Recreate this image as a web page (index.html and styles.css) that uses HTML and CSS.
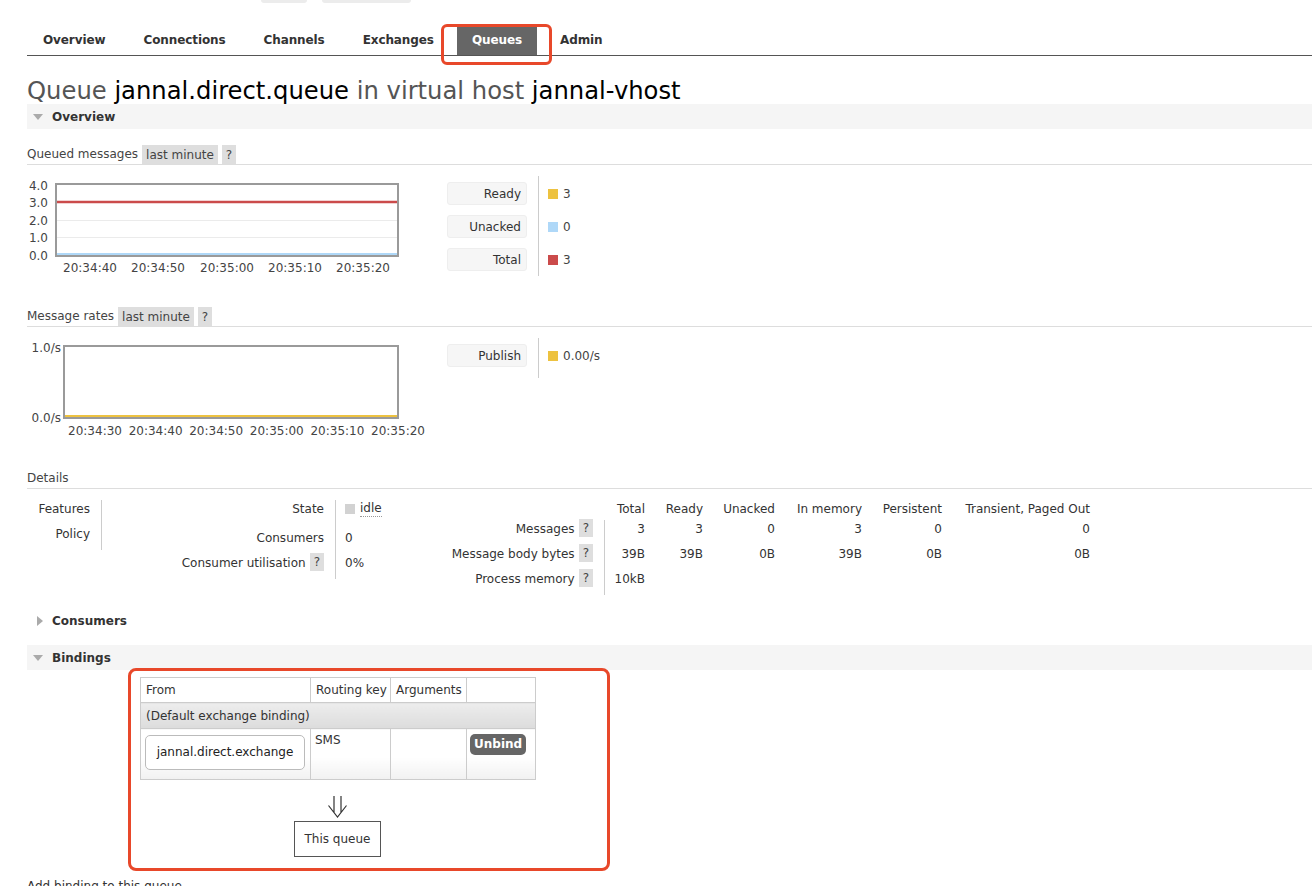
FILE: index.html
```html
<!DOCTYPE html>
<html lang="en">
<head>
<meta charset="utf-8">
<title>Queue jannal.direct.queue</title>
<link rel="stylesheet" href="styles.css">
</head>
<body>
<div class="page">
  <div class="topbar"><span class="stub stub-a"></span><span class="stub stub-b"></span></div>
  <ul class="tabs">
    <li class="tab">Overview</li>
    <li class="tab">Connections</li>
    <li class="tab">Channels</li>
    <li class="tab">Exchanges</li>
    <li class="tab active">Queues</li>
    <li class="tab">Admin</li>
  </ul>

  <h1 class="title">Queue <b>jannal.direct.queue</b> in virtual host <b>jannal-vhost</b></h1>

  <div class="section-head open"><span class="tri-down"></span>Overview</div>

  <div class="subhead">Queued messages <span class="tag">last minute</span><span class="tag">?</span></div>
  <div class="chart-row">
    <div class="chart">
      <svg class="plot plot-a" width="373" height="97" viewBox="0 0 373 97">
        <line class="grid" x1="30" y1="42.5" x2="370" y2="42.5"/>
        <line class="grid" x1="30" y1="59.5" x2="370" y2="59.5"/>
        <line class="s-total" x1="30" y1="24" x2="370" y2="24"/>
        <line class="s-unacked" x1="30" y1="76" x2="370" y2="76"/>
        <rect class="frame" x="29" y="6" width="342" height="72"/>
        <text class="yl" x="21" y="11.5">4.0</text>
        <text class="yl" x="21" y="28.5">3.0</text>
        <text class="yl" x="21" y="46.5">2.0</text>
        <text class="yl" x="21" y="63.5">1.0</text>
        <text class="yl" x="21" y="81.5">0.0</text>
        <text class="xl" x="63" y="93.5">20:34:40</text>
        <text class="xl" x="131" y="93.5">20:34:50</text>
        <text class="xl" x="200" y="93.5">20:35:00</text>
        <text class="xl" x="268" y="93.5">20:35:10</text>
        <text class="xl" x="336" y="93.5">20:35:20</text>
      </svg>
    </div>
    <div class="legend">
      <div class="legend-labels">
        <div class="legend-label">Ready</div>
        <div class="legend-label">Unacked</div>
        <div class="legend-label">Total</div>
      </div>
      <div class="legend-values">
        <div class="legend-value"><span class="swatch sw-ready"></span>3</div>
        <div class="legend-value"><span class="swatch sw-unacked"></span>0</div>
        <div class="legend-value"><span class="swatch sw-total"></span>3</div>
      </div>
    </div>
  </div>

  <div class="subhead gap-top">Message rates <span class="tag">last minute</span><span class="tag">?</span></div>
  <div class="chart-row">
    <div class="chart">
      <svg class="plot" width="403" height="100" viewBox="0 0 403 100">
        <line class="s-publish" x1="38" y1="78" x2="370" y2="78"/>
        <rect class="frame" x="37" y="8" width="334" height="72"/>
        <text class="yl" x="34" y="13.5">1.0/s</text>
        <text class="yl" x="34" y="83.5">0.0/s</text>
        <text class="xl" x="68" y="96.5">20:34:30</text>
        <text class="xl" x="128.6" y="96.5">20:34:40</text>
        <text class="xl" x="189.2" y="96.5">20:34:50</text>
        <text class="xl" x="249.8" y="96.5">20:35:00</text>
        <text class="xl" x="310.4" y="96.5">20:35:10</text>
        <text class="xl" x="371" y="96.5">20:35:20</text>
      </svg>
    </div>
    <div class="legend legend-short">
      <div class="legend-labels">
        <div class="legend-label">Publish</div>
      </div>
      <div class="legend-values">
        <div class="legend-value"><span class="swatch sw-ready"></span>0.00/s</div>
      </div>
    </div>
  </div>

  <div class="subhead gap-top">Details</div>
  <div class="details">
    <div class="facts facts-a">
      <div class="fk">Features</div><div class="fv"></div>
      <div class="fk">Policy</div><div class="fv"></div>
    </div>
    <div class="facts facts-b">
      <div class="fk">State</div><div class="fv state"><span class="state-box"></span><span class="abbr">idle</span></div>
      <div class="fk">Consumers</div><div class="fv">0</div>
      <div class="fk">Consumer utilisation <span class="help">?</span></div><div class="fv">0%</div>
    </div>
    <div class="facts facts-c">
      <div></div>
      <div class="ch">Total</div><div class="ch">Ready</div><div class="ch">Unacked</div><div class="ch">In memory</div><div class="ch">Persistent</div><div class="ch">Transient, Paged Out</div>

      <div class="fk">Messages <span class="help">?</span></div>
      <div class="cv first">3</div><div class="cv">3</div><div class="cv">0</div><div class="cv">3</div><div class="cv">0</div><div class="cv">0</div>

      <div class="fk">Message body bytes <span class="help">?</span></div>
      <div class="cv first">39B</div><div class="cv">39B</div><div class="cv">0B</div><div class="cv">39B</div><div class="cv">0B</div><div class="cv">0B</div>

      <div class="fk">Process memory <span class="help">?</span></div>
      <div class="cv first">10kB</div><div class="cv"></div><div class="cv"></div><div class="cv"></div><div class="cv"></div><div class="cv"></div>
    </div>
  </div>

  <div class="section-head consumers"><span class="tri-right"></span>Consumers</div>
  <div class="section-head open bindings-head"><span class="tri-down"></span>Bindings</div>

  <div class="bindings">
    <table class="btable">
      <colgroup><col class="c1"><col class="c2"><col class="c3"><col class="c4"></colgroup>
      <thead>
        <tr><th>From</th><th>Routing key</th><th>Arguments</th><th></th></tr>
      </thead>
      <tbody>
        <tr class="default"><td colspan="4">(Default exchange binding)</td></tr>
        <tr class="bind">
          <td class="from"><span class="exchange">jannal.direct.exchange</span></td>
          <td class="rk">SMS</td>
          <td></td>
          <td class="act"><span class="btn">Unbind</span></td>
        </tr>
      </tbody>
    </table>
    <div class="diagram">
      <svg class="arrow" width="19" height="22" viewBox="0 0 19 22"><path d="M6 0V16.6M13 0V16.6M0.5 9.5L9.5 21L18.5 9.5"/></svg>
      <div class="this-queue">This queue</div>
    </div>
  </div>

  <div class="add-binding">Add binding to this queue</div>

  <div class="mark mark-tab"></div>
  <div class="mark mark-bind"></div>
</div>
</body>
</html>
```

FILE: styles.css
```css
* { box-sizing: border-box; }

html, body { margin: 0; padding: 0; }

body {
  font-family: "DejaVu Sans", Verdana, sans-serif;
  font-size: 12px;
  color: #484848;
  background: #fff;
}

.page {
  position: relative;
  height: 886px;
  overflow: hidden;
  padding-left: 27px;
}

/* top cut-off header */
.topbar {
  display: flex;
  gap: 15px;
  height: 27px;
  padding-left: 234px;
}
.stub {
  height: 3px;
  background: #ececec;
  border-radius: 0 0 4px 4px;
}
.stub-a { width: 46px; }
.stub-b { width: 89px; }

/* tabs */
.tabs {
  display: flex;
  list-style: none;
  margin: 0;
  padding: 0 0 0 1px;
  height: 29px;
  border-bottom: 1px solid #555;
}
.tab {
  padding: 0 15px;
  margin-right: 8px;
  line-height: 27px;
  font-weight: bold;
  letter-spacing: -0.1px;
  color: #333;
}
.tab.active {
  background: #666;
  color: #fff;
}

/* title */
.title {
  margin: 20px 0 0;
  height: 28px;
  font-size: 24.25px;
  line-height: 30px;
  font-weight: normal;
  color: #555;
  white-space: nowrap;
}
.title b {
  font-weight: normal;
  color: #000;
}

/* section headers */
.section-head {
  display: flex;
  align-items: center;
  height: 25px;
  padding-left: 6px;
  font-weight: bold;
  color: #333;
}
.section-head.open { background: #f5f5f5; }
.consumers { margin-top: 13px; }
.bindings-head { margin-top: 12px; }

.tri-down {
  width: 0;
  height: 0;
  border-left: 5px solid transparent;
  border-right: 5px solid transparent;
  border-top: 6px solid #aaa;
  margin-right: 9px;
}
.tri-right {
  width: 0;
  height: 0;
  border-top: 5px solid transparent;
  border-bottom: 5px solid transparent;
  border-left: 6px solid #aaa;
  margin: 0 9px 0 4px;
}

/* sub headings */
.subhead {
  display: flex;
  align-items: center;
  gap: 4px;
  height: 20px;
  line-height: 21px;
  margin-top: 16px;
  border-bottom: 1px solid #ddd;
  color: #444;
}
.subhead.gap-top { margin-top: 31px; }
.tag {
  height: 19px;
  line-height: 20px;
  padding: 0 4px;
  background: #dedede;
  color: #444;
}

/* charts */
.chart-row {
  display: flex;
  margin-top: 11px;
}
.chart {
  width: 420px;
  flex: none;
}
.plot { display: block; }
.plot-a { margin-top: 2px; }
.plot text {
  font-family: "DejaVu Sans", Verdana, sans-serif;
  font-size: 12px;
  fill: #444;
}
.plot .yl { text-anchor: end; }
.plot .xl { text-anchor: middle; }
.plot .frame { fill: none; stroke: #9a9a9a; stroke-width: 2; }
.plot .grid { stroke: #ebebeb; stroke-width: 1; }
.plot .s-total { stroke: #cb4b4b; stroke-width: 2.5; }
.plot .s-unacked { stroke: #afd8f8; stroke-width: 2; }
.plot .s-publish { stroke: #edc240; stroke-width: 2; }

.legend {
  display: flex;
  align-self: flex-start;
}
.legend-short { min-height: 40px; }
.legend-labels {
  display: flex;
  flex-direction: column;
  gap: 10px;
  padding: 6px 11px 5px 0;
}
.legend-label {
  width: 80px;
  height: 23px;
  line-height: 22px;
  padding-right: 5px;
  text-align: right;
  color: #333;
  background: #f6f6f6;
  border: 1px solid #eee;
  border-radius: 3px;
}
.legend-values {
  display: flex;
  flex-direction: column;
  gap: 10px;
  padding: 6px 0 5px 9px;
  border-left: 1px solid #ccc;
}
.legend-value {
  display: flex;
  align-items: center;
  gap: 5px;
  height: 23px;
  color: #444;
}
.swatch { width: 10px; height: 10px; }
.sw-ready { background: #edc240; }
.sw-unacked { background: #afd8f8; }
.sw-total { background: #cb4b4b; }

/* details */
.details {
  display: flex;
  align-items: flex-start;
  margin-top: 11px;
}
.facts { display: grid; }
.facts-a {
  grid-template-columns: 74px 10px;
  grid-template-rows: 25px 25px;
}
.facts-b {
  grid-template-columns: 224px 75px;
  grid-template-rows: 29px 25px 25px;
}
.facts-c {
  grid-template-columns: 194px 41px 58px 72px 87px 80px 148px;
  grid-template-rows: 20px 25px 25px 25px;
}
.fk {
  display: flex;
  justify-content: flex-end;
  align-items: flex-start;
  gap: 4px;
  padding-right: 11px;
  padding-top: 1px;
  line-height: 16px;
  color: #333;
  white-space: nowrap;
}
.fv {
  border-left: 1px solid #ccc;
  padding-left: 9px;
  padding-top: 1px;
  line-height: 16px;
  color: #333;
}
.state {
  display: flex;
  align-items: flex-start;
  gap: 5px;
}
.state-box {
  width: 10px;
  height: 10px;
  margin-top: 3px;
  background: #d2d2d2;
}
.abbr {
  border-bottom: 1px dotted #999;
  line-height: 15px;
}
.help {
  display: inline-block;
  height: 18px;
  line-height: 18px;
  margin-top: -2px;
  padding: 0 4px;
  background: #dedede;
  color: #444;
}
.ch, .cv {
  text-align: right;
  padding-top: 1px;
  line-height: 16px;
  color: #333;
  white-space: nowrap;
}
.cv.first { border-left: 1px solid #ccc; }

/* bindings */
.bindings {
  width: 395px;
  margin: 7px 0 0 113px;
}
.btable {
  width: 395px;
  border-collapse: collapse;
  table-layout: fixed;
}
.c1 { width: 170px; }
.c2 { width: 80px; }
.c3 { width: 76px; }
.c4 { width: 69px; }
.btable th,
.btable td {
  border: 1px solid #ccc;
  padding: 0 5px;
  text-align: left;
  font-weight: normal;
  vertical-align: top;
  color: #333;
  white-space: nowrap;
}
.btable thead th {
  height: 25px;
  vertical-align: middle;
}
.btable .default td {
  height: 26px;
  vertical-align: middle;
  background: linear-gradient(#ededed, #dcdcdc);
}
.btable .bind td {
  height: 51px;
  background: linear-gradient(#fff 55%, #f1f1f1);
}
.btable .from { padding: 6px 4px 0; }
.btable .rk { padding: 4px 4px 0; }
.btable .act { padding: 5px 3px 0; }
.exchange {
  display: block;
  width: 160px;
  height: 35px;
  line-height: 33px;
  text-align: center;
  background: #fff;
  border: 1px solid #bbb;
  border-radius: 5px;
  color: #222;
}
.btn {
  display: inline-block;
  height: 21px;
  line-height: 21px;
  padding: 0 4px;
  background: #666;
  color: #fff;
  font-weight: bold;
  border-radius: 5px;
}
.diagram {
  display: flex;
  flex-direction: column;
  align-items: center;
}
.arrow {
  display: block;
  margin-top: 16px;
}
.arrow path {
  fill: none;
  stroke: #333;
  stroke-width: 1.2;
}
.this-queue {
  display: flex;
  align-items: center;
  justify-content: center;
  width: 87px;
  height: 36px;
  margin-top: 3px;
  border: 1px solid #555;
  color: #333;
}

.add-binding {
  margin-top: 21px;
  line-height: 16px;
  color: #333;
}

/* red annotation marks */
.mark {
  position: absolute;
  border: 3px solid #e8482a;
  border-radius: 6px;
  pointer-events: none;
}
.mark-tab {
  left: 441px;
  top: 24px;
  width: 111px;
  height: 41px;
}
.mark-bind {
  left: 128px;
  top: 668px;
  width: 482px;
  height: 203px;
  border-radius: 8px;
}
```
